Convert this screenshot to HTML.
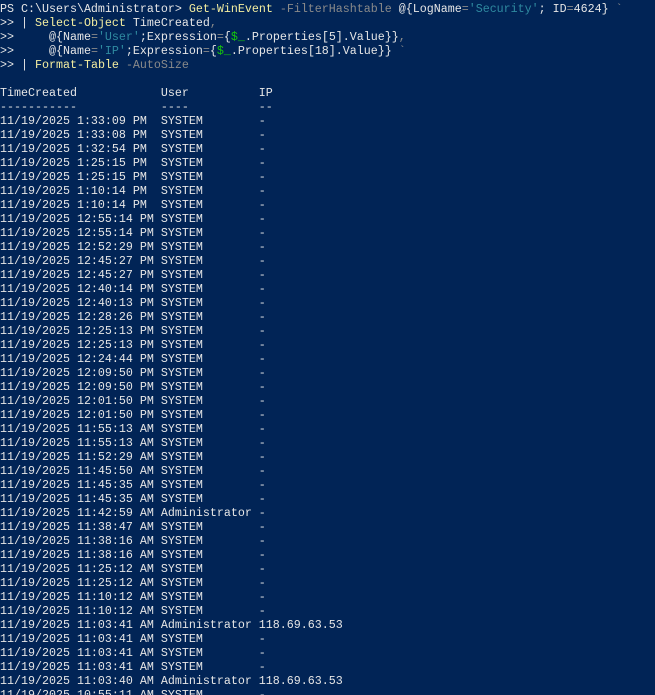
<!DOCTYPE html>
<html><head><meta charset="utf-8"><style>
html,body{margin:0;padding:0;background:#012456;width:655px;height:695px;overflow:hidden}
pre{margin:0;padding:2px 0 0 0;font-family:"Liberation Mono",monospace;font-size:11.67px;line-height:14px;color:#e6e6e6;white-space:pre}
.y{color:#f4eea0}.g{color:#8a8a8a}.s{color:#2f8aa0}.n{color:#16c60c}
</style></head><body><pre>PS C:\Users\Administrator&gt; <span class="y">Get-WinEvent</span> <span class="g">-FilterHashtable</span> @{LogName<span class="g">=</span><span class="s">'Security'</span>; ID<span class="g">=</span>4624} <span class="g">`</span>
&gt;&gt; | <span class="y">Select-Object</span> TimeCreated<span class="g">,</span>
&gt;&gt;     @{Name<span class="g">=</span><span class="s">'User'</span>;Expression<span class="g">=</span>{<span class="n">$_</span>.Properties[5].Value}}<span class="g">,</span>
&gt;&gt;     @{Name<span class="g">=</span><span class="s">'IP'</span>;Expression<span class="g">=</span>{<span class="n">$_</span>.Properties[18].Value}} <span class="g">`</span>
&gt;&gt; | <span class="y">Format-Table</span> <span class="g">-AutoSize</span>

TimeCreated            User          IP
-----------            ----          --
11/19/2025 1:33:09 PM  SYSTEM        -
11/19/2025 1:33:08 PM  SYSTEM        -
11/19/2025 1:32:54 PM  SYSTEM        -
11/19/2025 1:25:15 PM  SYSTEM        -
11/19/2025 1:25:15 PM  SYSTEM        -
11/19/2025 1:10:14 PM  SYSTEM        -
11/19/2025 1:10:14 PM  SYSTEM        -
11/19/2025 12:55:14 PM SYSTEM        -
11/19/2025 12:55:14 PM SYSTEM        -
11/19/2025 12:52:29 PM SYSTEM        -
11/19/2025 12:45:27 PM SYSTEM        -
11/19/2025 12:45:27 PM SYSTEM        -
11/19/2025 12:40:14 PM SYSTEM        -
11/19/2025 12:40:13 PM SYSTEM        -
11/19/2025 12:28:26 PM SYSTEM        -
11/19/2025 12:25:13 PM SYSTEM        -
11/19/2025 12:25:13 PM SYSTEM        -
11/19/2025 12:24:44 PM SYSTEM        -
11/19/2025 12:09:50 PM SYSTEM        -
11/19/2025 12:09:50 PM SYSTEM        -
11/19/2025 12:01:50 PM SYSTEM        -
11/19/2025 12:01:50 PM SYSTEM        -
11/19/2025 11:55:13 AM SYSTEM        -
11/19/2025 11:55:13 AM SYSTEM        -
11/19/2025 11:52:29 AM SYSTEM        -
11/19/2025 11:45:50 AM SYSTEM        -
11/19/2025 11:45:35 AM SYSTEM        -
11/19/2025 11:45:35 AM SYSTEM        -
11/19/2025 11:42:59 AM Administrator -
11/19/2025 11:38:47 AM SYSTEM        -
11/19/2025 11:38:16 AM SYSTEM        -
11/19/2025 11:38:16 AM SYSTEM        -
11/19/2025 11:25:12 AM SYSTEM        -
11/19/2025 11:25:12 AM SYSTEM        -
11/19/2025 11:10:12 AM SYSTEM        -
11/19/2025 11:10:12 AM SYSTEM        -
11/19/2025 11:03:41 AM Administrator 118.69.63.53
11/19/2025 11:03:41 AM SYSTEM        -
11/19/2025 11:03:41 AM SYSTEM        -
11/19/2025 11:03:41 AM SYSTEM        -
11/19/2025 11:03:40 AM Administrator 118.69.63.53
11/19/2025 10:55:11 AM SYSTEM        -
</pre></body></html>
